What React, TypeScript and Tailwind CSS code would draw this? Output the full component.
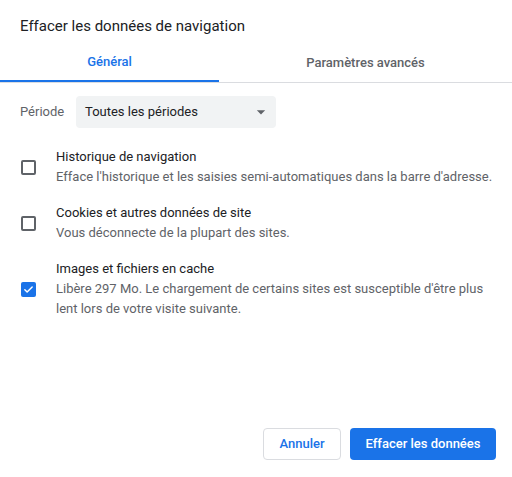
import React from "react";

const items = [
  {
    title: "Historique de navigation",
    desc: "Efface l'historique et les saisies semi-automatiques dans la barre d'adresse.",
    checked: false,
  },
  {
    title: "Cookies et autres données de site",
    desc: "Vous déconnecte de la plupart des sites.",
    checked: false,
  },
  {
    title: "Images et fichiers en cache",
    desc: "Libère 297 Mo. Le chargement de certains sites est susceptible d'être plus lent lors de votre visite suivante.",
    checked: true,
  },
];

const Checkbox = ({ checked }: { checked: boolean }) =>
  checked ? (
    <div className="w-[15px] h-[15px] rounded-[2px] bg-[#1a73e8] flex items-center justify-center shrink-0">
      <svg width="11" height="11" viewBox="0 0 24 24" fill="none">
        <path d="M4 12.5l5 5L20 6.5" stroke="white" strokeWidth="3.2" strokeLinecap="round" strokeLinejoin="round" />
      </svg>
    </div>
  ) : (
    <div className="w-[15px] h-[15px] rounded-[2px] border-2 border-[#5f6368] shrink-0" />
  );

export default function App() {
  return (
    <div className="h-[477px] w-[512px] bg-white flex flex-col font-['Roboto',Arial,sans-serif] text-[13px] text-[#202124]">
      <h1 className="px-5 pt-4 text-[15px] leading-5 text-[#202124]">
        Effacer les données de navigation
      </h1>

      <div className="mt-2 flex border-b border-[#dadce0] text-[13px] font-medium">
        <div className="w-[219px] h-[38px] flex items-center justify-center text-[#1a73e8] border-b-2 border-[#1a73e8] -mb-px">
          Général
        </div>
        <div className="flex-1 h-[38px] flex items-center justify-center text-[#5f6368]">
          Paramètres avancés
        </div>
      </div>

      <div className="mt-[13px] px-5 flex items-center">
        <span className="w-14 text-[#5f6368]">Période</span>
        <div className="w-[200px] h-8 rounded bg-[#f1f3f4] flex items-center justify-between pl-[9px] pr-[5px]">
          <span>Toutes les périodes</span>
          <svg width="20" height="20" viewBox="0 0 24 24">
            <path d="M7 10l5 5 5-5z" fill="#5f6368" />
          </svg>
        </div>
      </div>

      <div className="mt-[19px] flex flex-col gap-4">
        {items.map((item) => (
          <div key={item.title} className="flex items-center pl-[21px] pr-[11px]">
            <Checkbox checked={item.checked} />
            <div className="ml-5 leading-5">
              <div className="text-[#202124]">{item.title}</div>
              <div className="text-[#5f6368]">{item.desc}</div>
            </div>
          </div>
        ))}
      </div>

      <div className="mt-auto flex justify-end gap-[9px] px-4 pb-[17px]">
        <button className="h-8 w-[78px] rounded border border-[#dadce0] bg-white text-[#1a73e8] font-medium">
          Annuler
        </button>
        <button className="h-8 w-[146px] rounded bg-[#1a73e8] text-white font-medium">
          Effacer les données
        </button>
      </div>
    </div>
  );
}
